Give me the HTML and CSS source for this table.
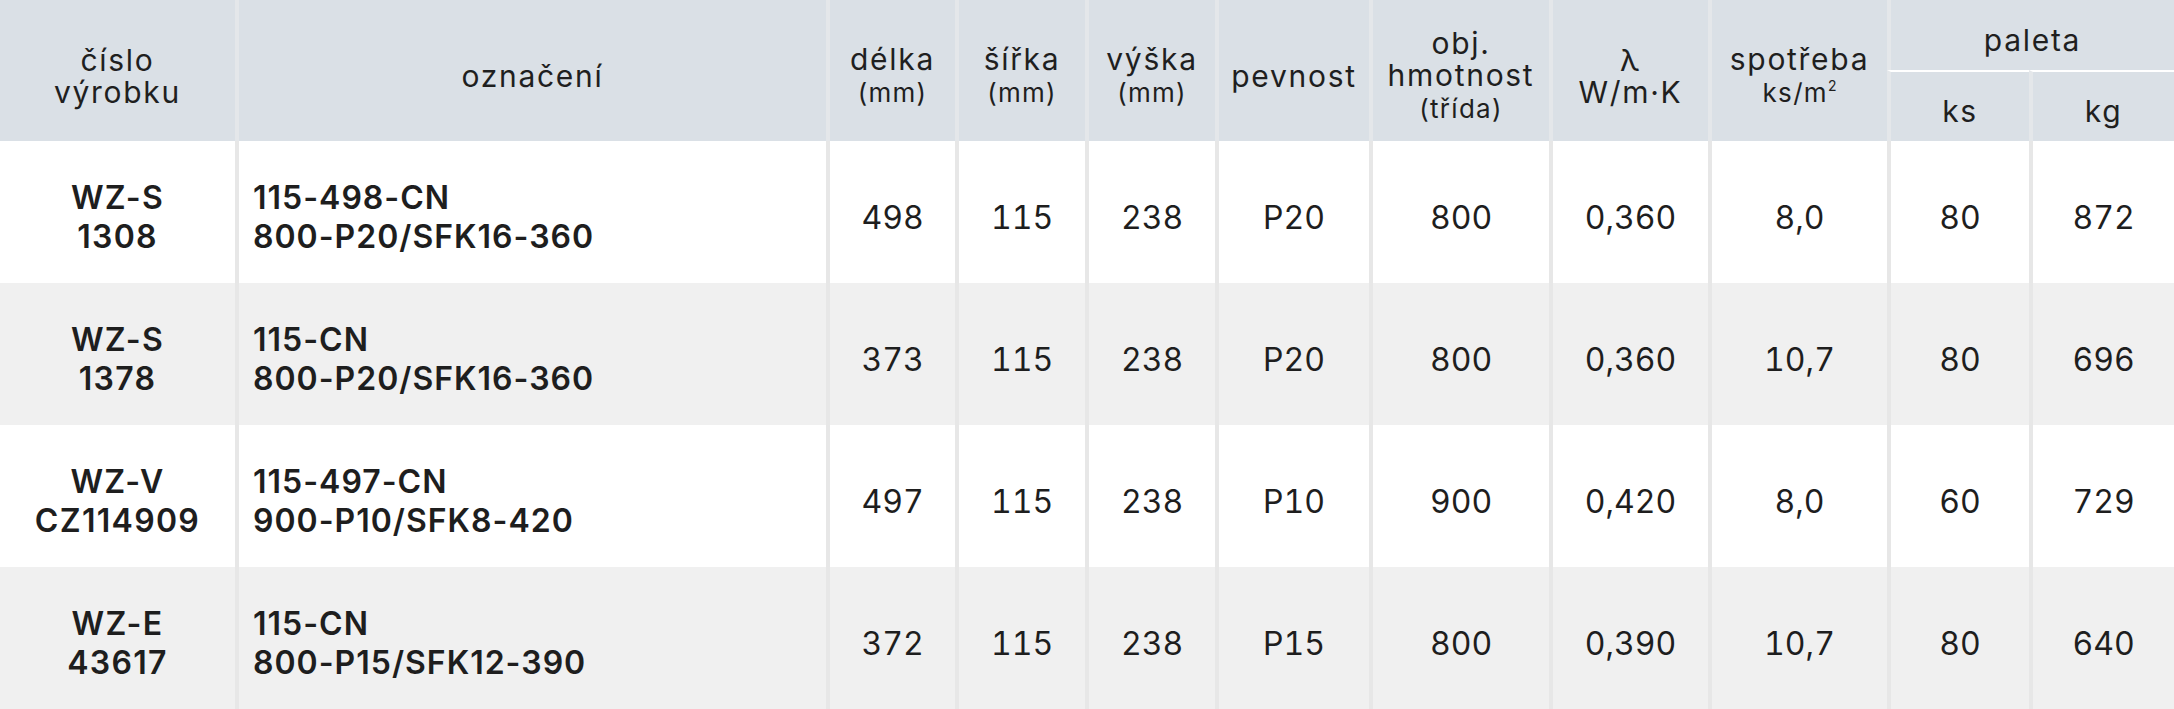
FILE: index.html
```html
<!DOCTYPE html>
<html lang="cs">
<head>
<meta charset="utf-8">
<title>Tabulka výrobků</title>
<link rel="stylesheet" href="styles.css">
</head>
<body>
<table class="spec">
  <colgroup>
    <col class="w-code">
    <col class="w-name">
    <col class="w-len">
    <col class="w-wid">
    <col class="w-hei">
    <col class="w-str">
    <col class="w-den">
    <col class="w-lam">
    <col class="w-use">
    <col class="w-ks">
    <col class="w-kg">
  </colgroup>
  <thead>
    <tr class="hrow-top">
      <th rowspan="2" class="first">číslo<br>výrobku</th>
      <th rowspan="2">označení</th>
      <th rowspan="2">délka<br><span class="sub">(mm)</span></th>
      <th rowspan="2">šířka<br><span class="sub">(mm)</span></th>
      <th rowspan="2">výška<br><span class="sub">(mm)</span></th>
      <th rowspan="2">pevnost</th>
      <th rowspan="2">obj.<br>hmotnost<br><span class="sub">(třída)</span></th>
      <th rowspan="2">λ<br>W/m·K</th>
      <th rowspan="2">spotřeba<br><span class="sub">ks/m<sup>2</sup></span></th>
      <th colspan="2" class="group">paleta</th>
    </tr>
    <tr class="hrow-sub">
      <th class="subhead">ks</th>
      <th class="subhead">kg</th>
    </tr>
  </thead>
  <tbody>
    <tr>
      <td class="code first">WZ-S<br>1308</td>
      <td class="name">115-498-CN<br>800-P20/SFK16-360</td>
      <td class="num">498</td>
      <td class="num">115</td>
      <td class="num">238</td>
      <td class="num">P20</td>
      <td class="num">800</td>
      <td class="num">0,360</td>
      <td class="num">8,0</td>
      <td class="num">80</td>
      <td class="num">872</td>
    </tr>
    <tr class="alt">
      <td class="code first">WZ-S<br>1378</td>
      <td class="name">115-CN<br>800-P20/SFK16-360</td>
      <td class="num">373</td>
      <td class="num">115</td>
      <td class="num">238</td>
      <td class="num">P20</td>
      <td class="num">800</td>
      <td class="num">0,360</td>
      <td class="num">10,7</td>
      <td class="num">80</td>
      <td class="num">696</td>
    </tr>
    <tr>
      <td class="code first">WZ-V<br>CZ114909</td>
      <td class="name">115-497-CN<br>900-P10/SFK8-420</td>
      <td class="num">497</td>
      <td class="num">115</td>
      <td class="num">238</td>
      <td class="num">P10</td>
      <td class="num">900</td>
      <td class="num">0,420</td>
      <td class="num">8,0</td>
      <td class="num">60</td>
      <td class="num">729</td>
    </tr>
    <tr class="alt">
      <td class="code first">WZ-E<br>43617</td>
      <td class="name">115-CN<br>800-P15/SFK12-390</td>
      <td class="num">372</td>
      <td class="num">115</td>
      <td class="num">238</td>
      <td class="num">P15</td>
      <td class="num">800</td>
      <td class="num">0,390</td>
      <td class="num">10,7</td>
      <td class="num">80</td>
      <td class="num">640</td>
    </tr>
  </tbody>
</table>
</body>
</html>
```
FILE: styles.css
```css
html, body {
  margin: 0;
  padding: 0;
  background: #ffffff;
}

body {
  font-family: Inter, "Noto Sans", "Liberation Sans", sans-serif;
  color: #1e1e1e;
}

.spec {
  width: 2174px;
  table-layout: fixed;
  border-collapse: separate;
  border-spacing: 0;
}

.w-code { width: 235px; }
.w-name { width: 591px; }
.w-len  { width: 129px; }
.w-wid  { width: 130px; }
.w-hei  { width: 130px; }
.w-str  { width: 154px; }
.w-den  { width: 180px; }
.w-lam  { width: 159px; }
.w-use  { width: 179px; }
.w-ks   { width: 142px; }
.w-kg   { width: 145px; }

/* header */
.spec th {
  background: #dae0e6;
  color: #1f1f1f;
  font-weight: 400;
  font-size: 30px;
  line-height: 32px;
  letter-spacing: 1.7px;
  text-align: center;
  vertical-align: middle;
  padding: 10px 0 0;
  border-left: 4px solid #e4e7ea;
}

.spec th.first {
  border-left: 0;
}

.hrow-top { height: 70px; }
.hrow-sub { height: 71px; }

.spec th.subhead {
  border-top: 2px solid #ffffff;
  padding-top: 8px;
}

.sub {
  font-size: 26px;
  letter-spacing: 1.3px;
}

.sub sup {
  font-size: 14px;
  line-height: 0;
  letter-spacing: 0;
  vertical-align: 11px;
}

/* body */
.spec tbody tr {
  height: 142px;
  background: #ffffff;
}

.spec tbody tr.alt {
  background: #f0f0f0;
}

.spec td {
  font-size: 32px;
  line-height: 39px;
  vertical-align: middle;
  padding: 10px 0 0;
  border-left: 4px solid #e7e7e7;
  color: #1e1e1e;
}

.spec td.first {
  border-left: 0;
}

.spec td.code {
  text-align: center;
  font-weight: 600;
  letter-spacing: 1.3px;
}

.spec td.name {
  text-align: left;
  font-weight: 600;
  letter-spacing: 1px;
  padding-left: 14px;
}

.spec td.num {
  text-align: center;
  font-weight: 400;
  font-variant-numeric: tabular-nums;
}
```
